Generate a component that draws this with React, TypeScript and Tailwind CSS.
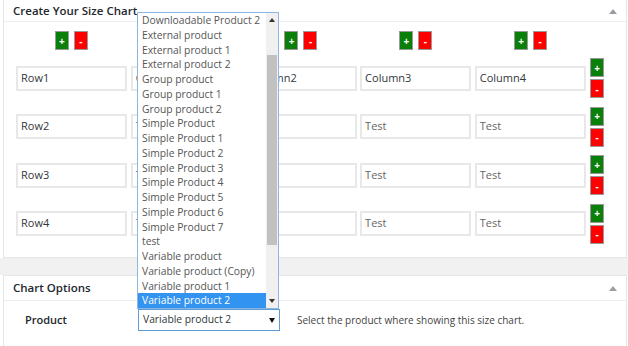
import React from 'react';

const font = { fontFamily: '"Open Sans", "Noto Sans", sans-serif' };

const products = [
  'Downloadable Product 2',
  'External product',
  'External product 1',
  'External product 2',
  'Group product',
  'Group product 1',
  'Group product 2',
  'Simple Product',
  'Simple Product 1',
  'Simple Product 2',
  'Simple Product 3',
  'Simple Product 4',
  'Simple Product 5',
  'Simple Product 6',
  'Simple Product 7',
  'test',
  'Variable product',
  'Variable product (Copy)',
  'Variable product 1',
  'Variable product 2',
];

const rows = [
  ['Row1', 'Column1', 'Column2', 'Column3', 'Column4'],
  ['Row2', 'Test', 'Test', 'Test', 'Test'],
  ['Row3', 'Test', 'Test', 'Test', 'Test'],
  ['Row4', 'Test', 'Test', 'Test', 'Test'],
];

function AddBtn() {
  return (
    <div className="flex h-[19px] w-[14px] items-center justify-center border border-[#9a9a9a] bg-[#0a7f0a] text-[10px] font-bold leading-none text-white">
      +
    </div>
  );
}

function RemoveBtn() {
  return (
    <div className="flex h-[19px] w-[14px] items-center justify-center border border-[#9a9a9a] bg-[#ff0000] text-[10px] font-bold leading-none text-white">
      -
    </div>
  );
}

function Toggle() {
  return (
    <svg width="8" height="6" viewBox="0 0 8 6">
      <path d="M0 6 L4 1 L8 6 Z" fill="#9a9ea3" />
    </svg>
  );
}

function ProductList() {
  return (
    <div className="absolute left-[137px] top-[12px] flex h-[297px] w-[142px] border border-[#8fb6e3] bg-white">
      <div className="flex-1 overflow-hidden">
        {products.map((p) => (
          <div
            key={p}
            className={
              p === 'Variable product 2'
                ? 'h-[14.75px] whitespace-nowrap bg-[#3393f0] pl-[4px] text-[10.3px] leading-[14.75px] text-white'
                : 'h-[14.75px] whitespace-nowrap pl-[4px] text-[10.3px] leading-[14.75px] text-[#555]'
            }
          >
            {p}
          </div>
        ))}
      </div>
      <div className="flex w-[12px] flex-col bg-[#f0f0f0]">
        <div className="flex h-[14px] items-center justify-center">
          <svg width="6" height="4" viewBox="0 0 6 4">
            <path d="M0 4 L3 0 L6 4 Z" fill="#333" />
          </svg>
        </div>
        <div className="mx-[1px] mt-[28px] h-[190px] bg-[#c1c1c1]" />
        <div className="flex-1" />
        <div className="flex h-[14px] items-center justify-center">
          <svg width="6" height="4" viewBox="0 0 6 4">
            <path d="M0 0 L3 4 L6 0 Z" fill="#333" />
          </svg>
        </div>
      </div>
    </div>
  );
}

export default function App() {
  return (
    <div className="relative h-[346px] w-[628px] overflow-hidden bg-white" style={font}>
      <div className="ml-[3px] mr-[1px] h-[258px] border-x border-b border-[#e5e5e5] bg-white">
        <div className="flex h-[22px] items-center justify-between border-b border-[#eee] pl-[9px] pr-[9px]">
          <span className="text-[11.5px] font-semibold text-[#23282d]">Create Your Size Chart</span>
          <Toggle />
        </div>
        <div className="pl-[12px] pt-[9px]">
          <div className="grid w-[570px] grid-cols-5 gap-1">
            {[0, 1, 2, 3, 4].map((i) => (
              <div key={i} className="flex justify-center gap-[5px]">
                {i !== 1 && (
                  <>
                    <AddBtn />
                    <RemoveBtn />
                  </>
                )}
              </div>
            ))}
          </div>
          <div className="mt-[8px] flex flex-col gap-[8.5px]">
            {rows.map((r) => (
              <div key={r[0]} className="flex h-[40px] items-center gap-[4px]">
                <div className="grid w-[570px] grid-cols-5 gap-[3.5px]">
                  {r.map((c, j) => (
                    <div
                      key={j}
                      className={
                        'flex h-[25px] items-center border-2 border-[#e8e8e8] pl-[3px] text-[11px] ' +
                        (c === 'Test' ? 'text-[#666]' : 'text-[#32373c]')
                      }
                    >
                      {c}
                    </div>
                  ))}
                </div>
                <div className="flex flex-col gap-[2px]">
                  <AddBtn />
                  <RemoveBtn />
                </div>
              </div>
            ))}
          </div>
        </div>
      </div>
      <div className="h-[17px] bg-[#f1f1f1]" />
      <div className="ml-[3px] mr-[1px] h-[80px] border-x border-t border-[#e5e5e5] bg-white">
        <div className="flex h-[25px] items-center justify-between border-b border-[#eee] pl-[9px] pr-[9px]">
          <span className="text-[11.5px] font-semibold text-[#23282d]">Chart Options</span>
          <Toggle />
        </div>
        <div className="flex items-center pt-[8px]">
          <div className="w-[134px] pl-[21px] text-[11px] font-semibold text-[#23282d]">Product</div>
          <div className="flex h-[22px] w-[142px] items-center justify-between border border-[#5b9dd9] pl-[4px] pr-[4px] text-[10.3px] text-[#32373c]">
            <span>Variable product 2</span>
            <svg width="6" height="5" viewBox="0 0 6 5">
              <path d="M0 0 L3 5 L6 0 Z" fill="#111" />
            </svg>
          </div>
          <div className="pl-[17px] text-[10px] text-[#444]">Select the product where showing this size chart.</div>
        </div>
      </div>
      <ProductList />
    </div>
  );
}
